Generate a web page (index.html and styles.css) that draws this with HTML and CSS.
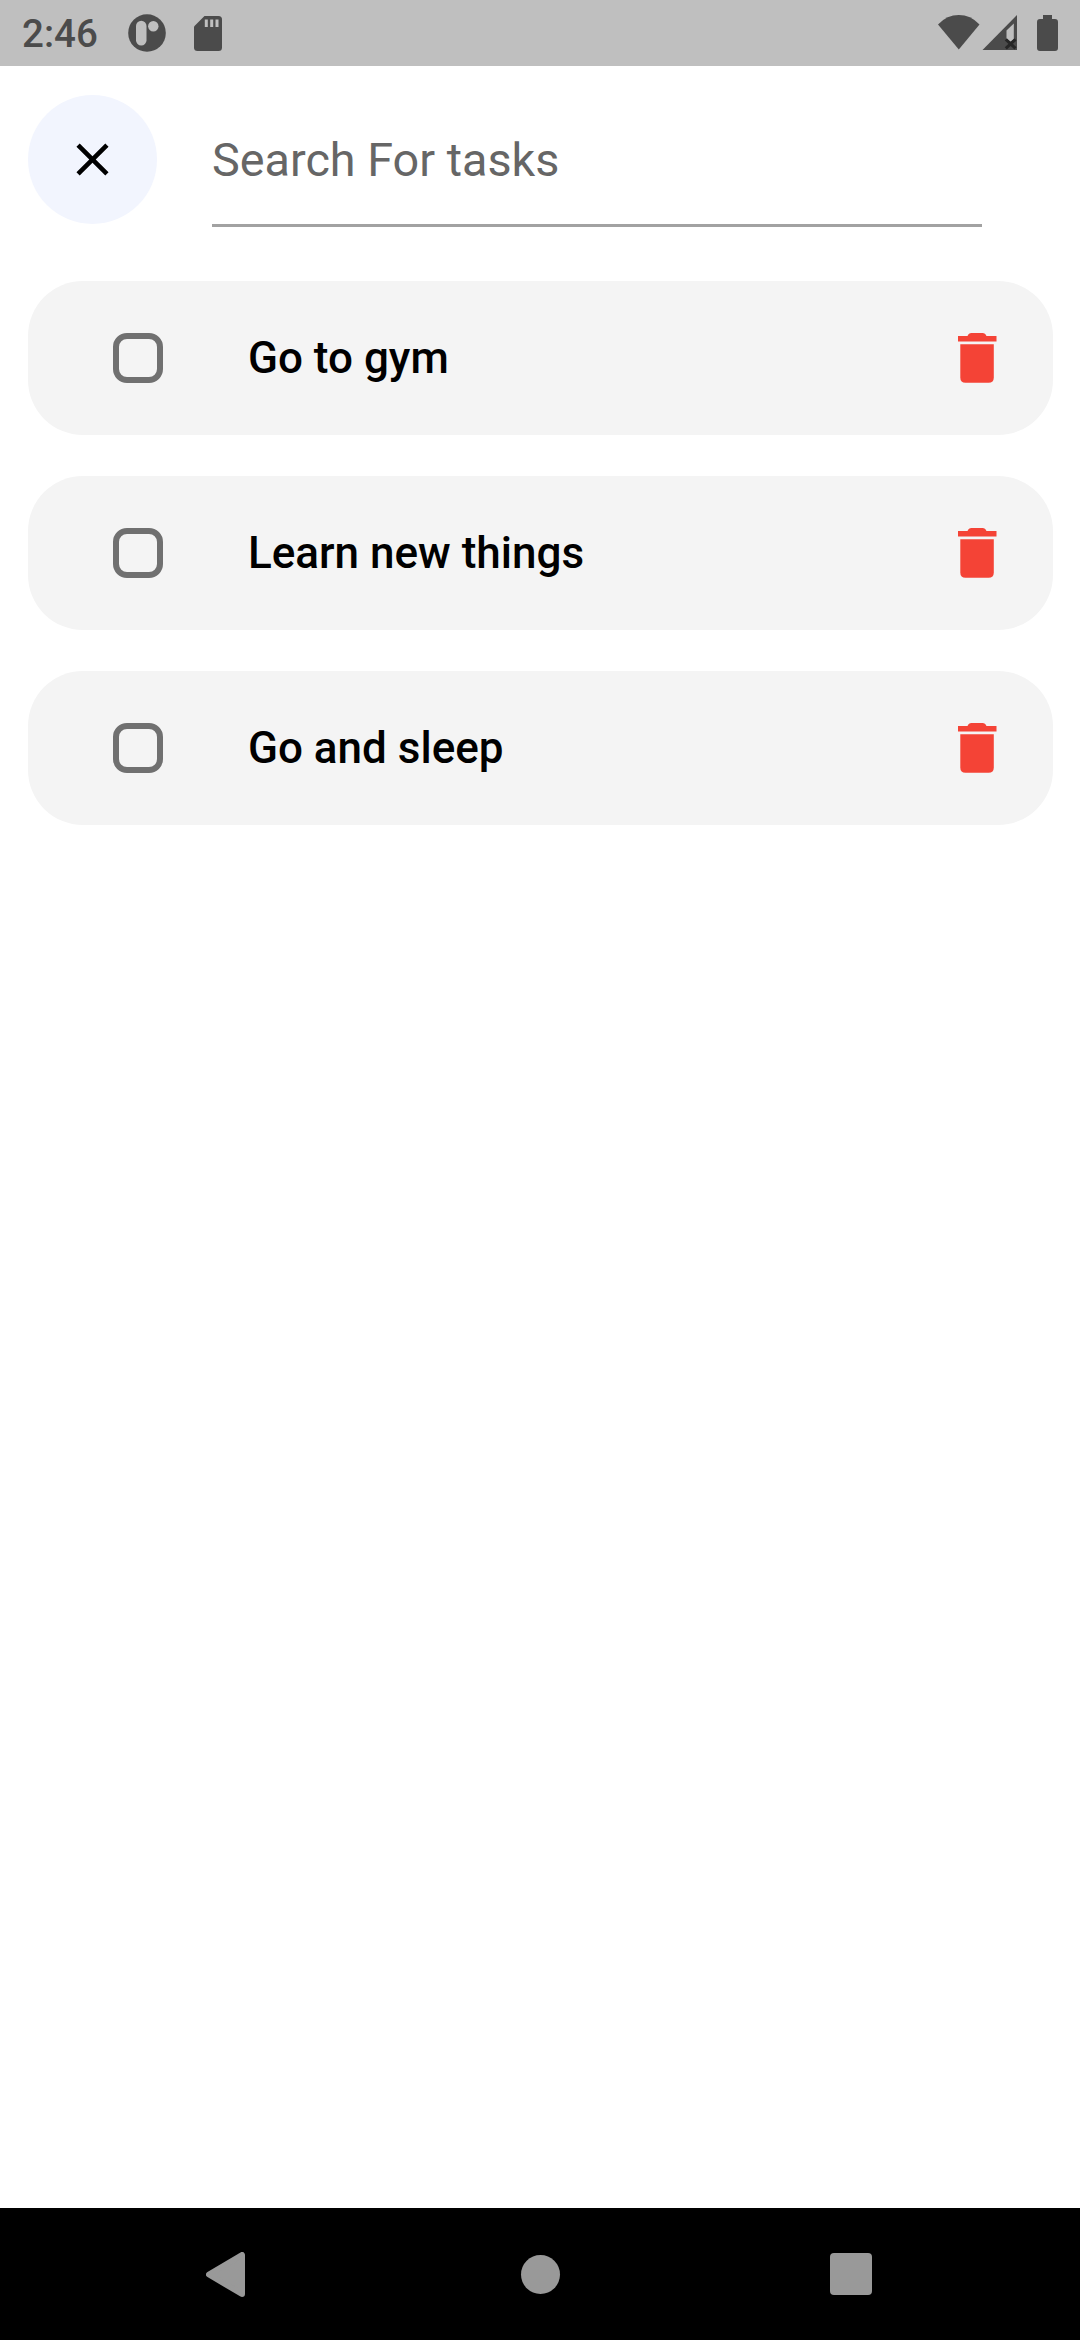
FILE: index.html
```html
<!DOCTYPE html>
<html lang="en">
<head>
<meta charset="utf-8">
<title>Tasks</title>
<link rel="stylesheet" href="styles.css">
</head>
<body>
<svg class="defs" width="0" height="0" aria-hidden="true">
  <symbol id="trash" viewBox="0 0 40 50">
    <path d="M1 3H10.5C11.3 1 12.5 0 14.5 0H25.500C27.500 0 28.700 1 29.500 3H39.500V8.600H1Z"/>
    <path d="M3.300 11.200H36.800V44.500Q36.800 49.800 31.500 49.800H8.600Q3.300 49.800 3.300 44.500Z"/>
  </symbol>
</svg>
<div class="screen">
  <header class="status">
    <span class="clock">2:46</span>
    <svg class="app-icon" viewBox="0 0 38 38">
      <circle cx="19" cy="19" r="18.800"/>
      <rect class="hole" x="8" y="6.800" width="10.500" height="24.800" rx="5.250"/>
      <circle class="hole" cx="25.300" cy="12.300" r="5.200"/>
    </svg>
    <svg class="sd-icon" viewBox="0 0 28 35">
      <path d="M10.500 0H24.500Q28 0 28 3.500V31.500Q28 35 24.500 35H3.500Q0 35 0 31.500V10.500Z"/>
      <path class="hole" d="M10.800 3.600h3v7.400h-3zM16.200 3.600h3v7.400h-3zM21.500 3.600h3v7.400h-3z"/>
    </svg>
    <svg class="wifi-icon" viewBox="0 0 42 35">
      <path d="M0 9.400Q9 0 20.800 0T41.500 9.400L20.800 34.600Z"/>
    </svg>
    <svg class="signal-icon" viewBox="0 0 35 35">
      <path d="M.5 35 35 0V35Z"/>
      <path class="hole" d="M24.500 15.500 31.800 8.500V24L28.500 26.800 24.500 24Z"/>
      <path class="cross" d="M23.800 24.300 33.500 33.300M33.500 24.300 23.800 33.300"/>
    </svg>
    <svg class="battery-icon" viewBox="0 0 21 36">
      <path d="M6 0H15V4H18Q21 4 21 7V33Q21 36 18 36H3Q0 36 0 33V7Q0 4 3 4H6Z"/>
    </svg>
  </header>
  <main class="content">
    <div class="search">
      <button class="close" aria-label="Close">
        <svg viewBox="0 0 24 24"><path d="M19 6.410L17.590 5 12 10.590 6.410 5 5 6.410 10.590 12 5 17.590 6.410 19 12 13.410 17.590 19 19 17.590 13.410 12Z"/></svg>
      </button>
      <div class="field"><span>Search For tasks</span></div>
    </div>
    <ul class="tasks">
      <li class="task">
        <span class="checkbox"></span>
        <span class="title">Go to gym</span>
        <svg class="trash"><use href="#trash"/></svg>
      </li>
      <li class="task">
        <span class="checkbox"></span>
        <span class="title">Learn new things</span>
        <svg class="trash"><use href="#trash"/></svg>
      </li>
      <li class="task">
        <span class="checkbox"></span>
        <span class="title">Go and sleep</span>
        <svg class="trash"><use href="#trash"/></svg>
      </li>
    </ul>
  </main>
  <nav class="navbar">
    <svg class="back" viewBox="0 0 39 45"><path d="M36 3V42L3 22.500Z"/></svg>
    <span class="home"></span>
    <span class="recents"></span>
  </nav>
</div>
</body>
</html>
```

FILE: styles.css
```css
* { box-sizing: border-box; }

body {
  margin: 0;
  background: #fff;
  font-family: Roboto, sans-serif;
}

svg { display: block; flex: none; }

.defs { position: absolute; }

.screen {
  display: flex;
  flex-direction: column;
  width: 1080px;
  height: 2340px;
}

.status {
  display: flex;
  align-items: flex-start;
  height: 66px;
  padding: 0 22px;
  background: #bfbfbf;
  fill: #4b4b4b;
}

.clock {
  width: 106px;
  margin-top: 2px;
  color: #4b4b4b;
  font-size: 38.5px;
  font-weight: 500;
  line-height: 64px;
}

.hole { fill: #bfbfbf; }

.app-icon { width: 38px; height: 38px; margin-top: 14px; }
.sd-icon { width: 28px; height: 35px; margin: 16px 0 0 28px; }
.wifi-icon { width: 42px; height: 35px; margin: 15px 0 0 auto; }
.signal-icon { width: 35px; height: 35px; margin: 15px 0 0 2px; overflow: visible; }
.battery-icon { width: 21px; height: 36px; margin: 15px 0 0 20px; }

.cross { stroke: #262626; stroke-width: 3; }

.content {
  flex: 1;
  padding: 29px 27px 0 28px;
}

.search {
  display: flex;
  align-items: flex-start;
  gap: 55px;
}

.close {
  display: flex;
  flex: none;
  align-items: center;
  justify-content: center;
  width: 129px;
  height: 129px;
  padding: 0;
  border: 0;
  border-radius: 50%;
  background: #f2f5fe;
}

.close svg {
  width: 55px;
  height: 55px;
}

.field {
  width: 770px;
  height: 132px;
  border-bottom: 3px solid #a2a2a2;
  color: #666;
  font-size: 46.75px;
  line-height: 130px;
}

.tasks {
  display: flex;
  flex-direction: column;
  gap: 41px;
  margin: 54px 0 0;
  padding: 0;
  list-style: none;
}

.task {
  display: flex;
  align-items: center;
  height: 154px;
  padding: 0 56px 0 85px;
  border-radius: 55px;
  background: #f4f4f4;
}

.checkbox {
  width: 50px;
  height: 50px;
  border: 6px solid #707070;
  border-radius: 14px;
}

.title {
  flex: 1;
  margin-left: 85px;
  font-size: 44px;
  font-weight: 500;
}

.trash {
  width: 40px;
  height: 50px;
  fill: #f44336;
}

.navbar {
  display: flex;
  align-items: center;
  height: 132px;
  padding: 0 208px 0 206px;
  background: #000;
}

.back {
  width: 39px;
  height: 45px;
  fill: #999;
  stroke: #999;
  stroke-width: 6;
  stroke-linejoin: round;
}

.home {
  width: 39px;
  height: 39px;
  margin-left: 276px;
  border-radius: 50%;
  background: #999;
}

.recents {
  width: 42px;
  height: 42px;
  margin-left: auto;
  border-radius: 4px;
  background: #999;
}
```
